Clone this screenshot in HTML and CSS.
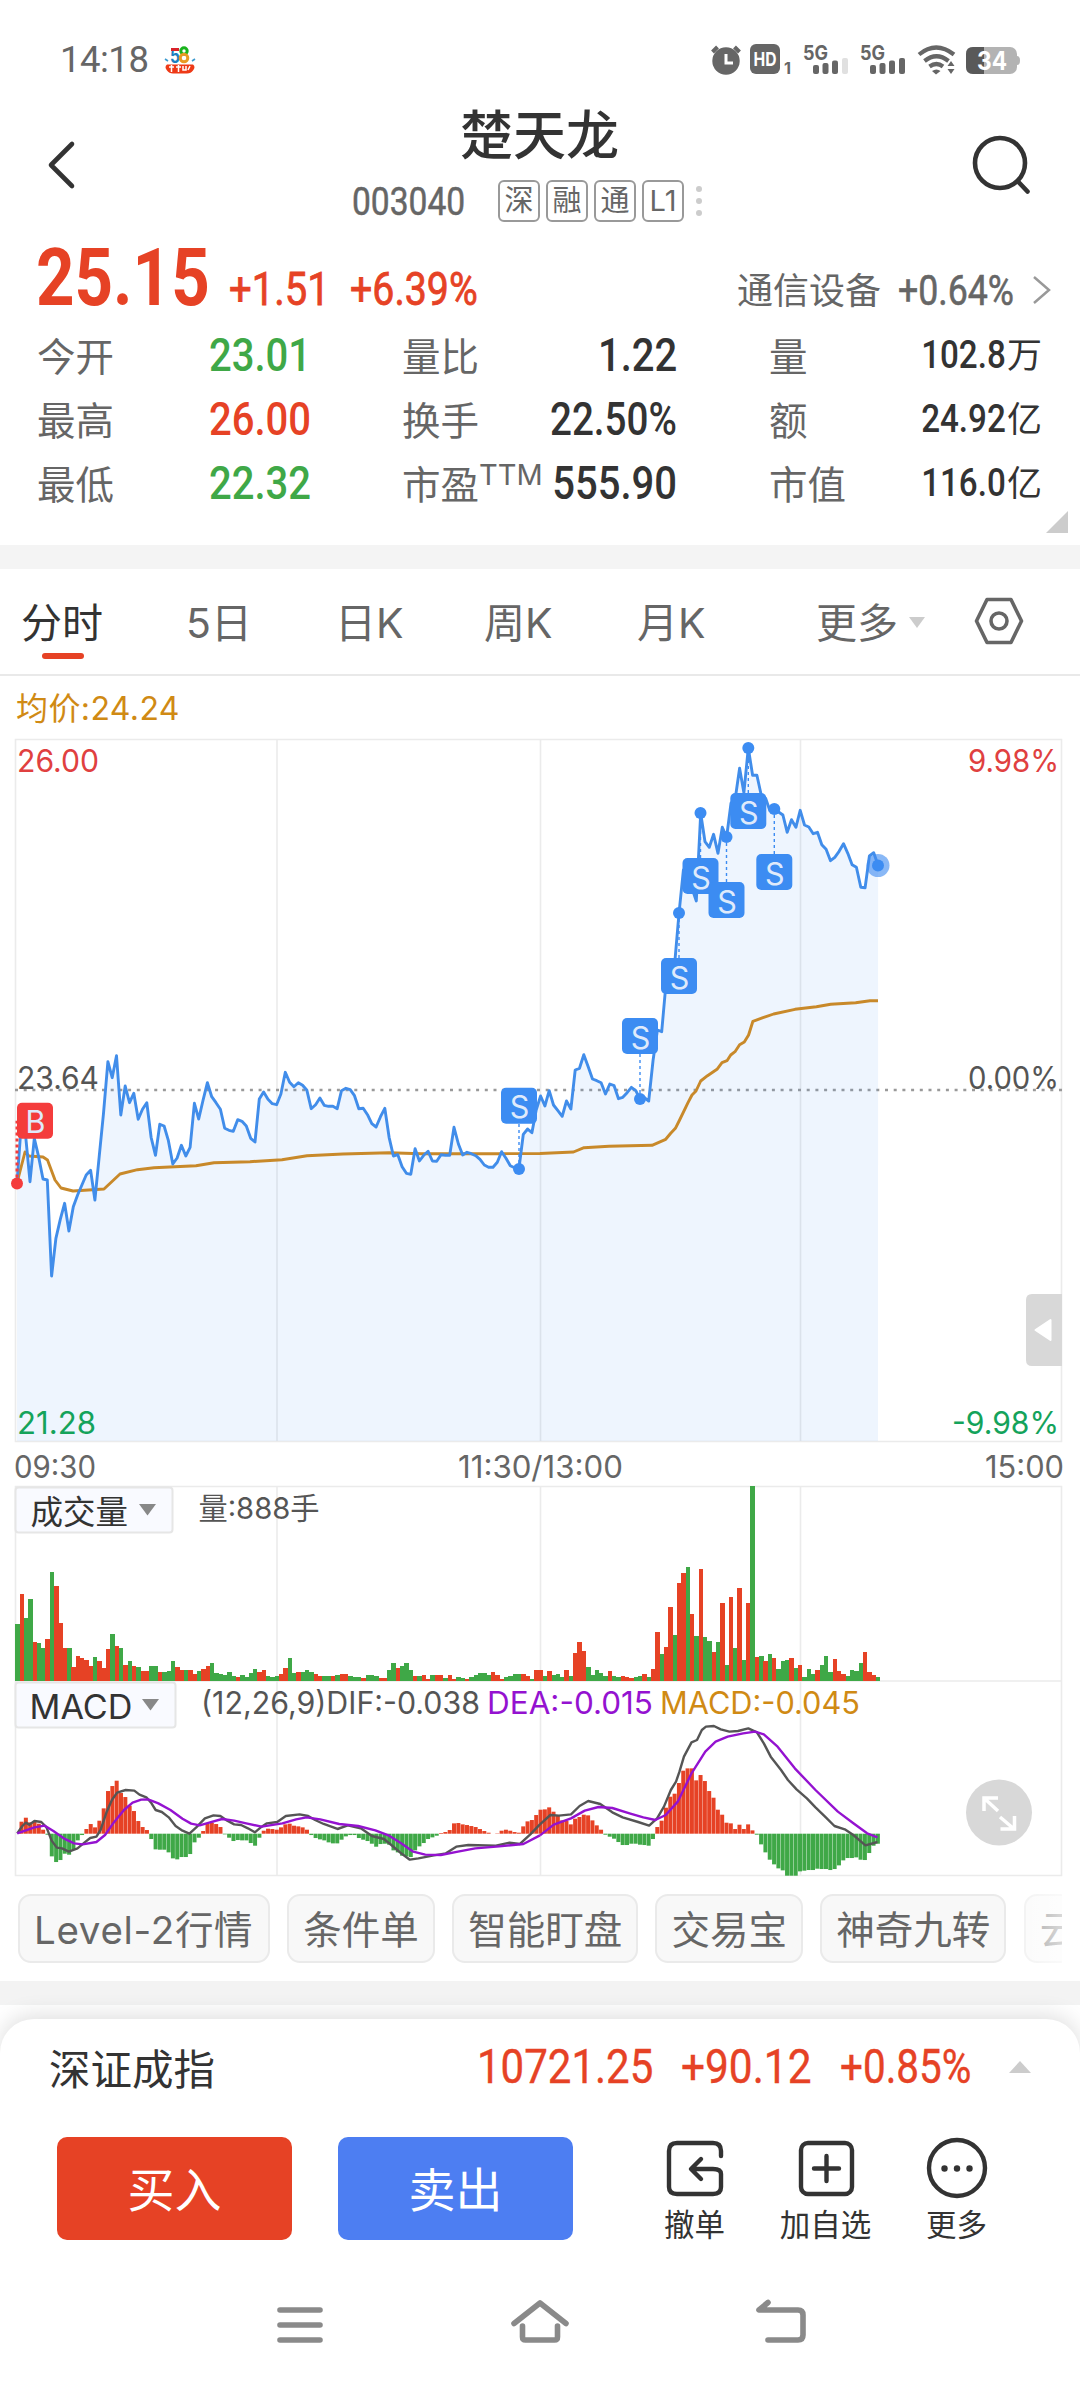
FILE: index.html
```html
<!DOCTYPE html>
<html lang="zh-CN">
<head>
<meta charset="utf-8">
<title>楚天龙 003040</title>
<link rel="stylesheet" href="styles.css">
</head>
<body>
<header class="status">
  <span class="clock">14:18</span>
  <svg class="app58" width="32" height="30" viewBox="0 0 32 30">
    <text x="6" y="18" font-size="20" class="bold" fill="#1c7fc0" textLength="10" lengthAdjust="spacingAndGlyphs">5</text>
    <path d="M7 3h8v3H7z" fill="#d8222a"/>
    <circle cx="20" cy="6" r="3.2" fill="none" stroke="#19b31c" stroke-width="3"/>
    <circle cx="20" cy="13" r="3.8" fill="none" stroke="#e99a23" stroke-width="3"/>
    <path d="M1 14l3 2M31 14l-3 2" stroke="#3a9ad0" stroke-width="1.6"/>
    <path d="M3 19.500h26q3 2.500 0 6-2 3-6 3H9q-4 0-6-3-3-3.500 0-6z" fill="#ee3a17"/>
    <path d="M5 22h5M7.500 20v7M12 22h5M14.500 20v7M19 21v4h3v-4M24 25l2-4" stroke="#fff" stroke-width="1.500" fill="none"/>
  </svg>
  <svg class="sysicons" width="310" height="34" viewBox="710 42 310 34">
    <g fill="#666">
      <circle cx="726" cy="61" r="13.700"/>
      <path d="M712.500 52l5-5M739.500 52l-5-5" stroke="#666" stroke-width="4"/>
      <path d="M726 54v9h7" stroke="#fff" stroke-width="3" fill="none"/>
      <rect x="750" y="44" width="30" height="30" rx="6"/>
      <text x="753.500" y="66" font-size="19" class="bold" fill="#fff" textLength="23" lengthAdjust="spacingAndGlyphs">HD</text>
      <text x="784" y="73.500" font-size="16" class="bold" textLength="7" lengthAdjust="spacingAndGlyphs">1</text>
      <text x="803" y="59.500" font-size="20" class="bold" textLength="25" lengthAdjust="spacingAndGlyphs">5G</text>
      <text x="860" y="59.500" font-size="20" class="bold" textLength="25" lengthAdjust="spacingAndGlyphs">5G</text>
      <rect x="813" y="65" width="6" height="9" rx="2"/><rect x="822.500" y="63" width="6" height="11" rx="2"/><rect x="832" y="60.500" width="6" height="13.500" rx="2"/><rect x="842" y="58" width="6" height="16" rx="2" fill="#e0e0e0"/>
      <rect x="870" y="65" width="6" height="9" rx="2"/><rect x="879.500" y="63" width="6" height="11" rx="2"/><rect x="889" y="60.500" width="6" height="13.500" rx="2"/><rect x="899" y="58" width="6" height="16" rx="2"/>
      <path d="M919 54.500q17-14 35 0M924.500 61q12-9.500 24 0M929.500 66.500q7-5 13.500 0" fill="none" stroke="#666" stroke-width="4.200"/>
      <path d="M932 71q4.500-3 8.500 0l-4.500 3.500zM947.500 66l3.500-5 3.500 5zM947.500 69l3.500 5 3.500-5z"/>
    </g>
    <rect x="966" y="47" width="51" height="27" rx="7" fill="#b3b3b3"/>
    <path d="M1017 56q3 0 3 4.500t-3 4.500z" fill="#b3b3b3"/>
    <path d="M984 47h-11q-7 0-7 7v13q0 7 7 7h11z" fill="#595959"/>
    <text x="977" y="70" font-size="25" class="bold" fill="#fff" textLength="30" lengthAdjust="spacingAndGlyphs">34</text>
  </svg>
</header>

<div class="titlebar">
  <svg width="28" height="50" viewBox="0 0 28 50"><path d="M24 4L3 25l21 21" class="ln thick"/></svg>
  <div class="name">
    <h1>楚天龙</h1>
    <div class="sub">
      <span class="din code">003040</span>
      <i class="tag">深</i><i class="tag">融</i><i class="tag">通</i><i class="tag">L1</i>
      <svg width="6" height="32" viewBox="0 0 6 32" fill="#ccc"><circle cx="3" cy="4" r="3"/><circle cx="3" cy="16" r="3"/><circle cx="3" cy="28" r="3"/></svg>
    </div>
  </div>
  <svg width="60" height="60" viewBox="0 0 60 60"><circle cx="29" cy="29" r="25" class="ln thick"/><path d="M47 47.500l9.500 10" class="ln thick"/></svg>
</div>

<section class="quote">
  <div class="priceline">
    <span class="din price">25.15</span>
    <span class="din chg">+1.51</span>
    <span class="din pct">+6.39%</span>
    <span class="sector">通信设备</span>
    <span class="din secpct">+0.64%</span>
    <svg class="chev" width="20" height="32" viewBox="0 0 20 32"><path d="M2 3l15 13L2 29" fill="none" stroke="#999" stroke-width="2.500"/></svg>
  </div>
  <div class="stats">
    <b>今开</b><span class="din first green">23.01</span><p><b>量比</b><span class="din end">1.22</span></p><p><b>量</b><span class="unit"><span class="din end sm">102.8</span>万</span></p>
    <b>最高</b><span class="din first red">26.00</span><p><b>换手</b><span class="din end wide">22.50%</span></p><p><b>额</b><span class="unit"><span class="din end sm">24.92</span>亿</span></p>
    <b>最低</b><span class="din first green">22.32</span><p><b>市盈<sup>TTM</sup></b><span class="din end">555.90</span></p><p><b>市值</b><span class="unit"><span class="din end sm">116.0</span>亿</span></p>
  </div>
  <i class="corner"></i>
</section>

<nav class="tabs">
  <span class="on">分时</span><span>5日</span><span>日K</span><span>周K</span><span>月K</span>
  <span class="more">更多<i class="tri"></i></span>
  <svg width="50" height="50" viewBox="0 0 50 50" fill="none" stroke="#666" stroke-width="3.600" stroke-linejoin="round"><path d="M13 3.500h24L47.500 25 37 46.500H13L2.500 25z"/><circle cx="25" cy="25" r="8"/></svg>
</nav>
<div class="avg">均价:24.24</div>

<svg class="chart" id="chart" width="1080" height="1145" viewBox="0 734 1080 1145">
  <g class="grid">
    <path d="M15.500 739.500H1061.500V1441.500H15.500zM277 739.500V1441.500M540.500 739.500V1441.500M800.500 739.500V1441.500"/>
    <path d="M15.500 1486.500H1061.500V1875.500H15.500zM277 1486.500V1875.500M540.500 1486.500V1875.500M800.500 1486.500V1875.500M15 1681H1062"/>
  </g>
  <path d="M15 1090H1062" stroke="#999" stroke-width="2.600" stroke-dasharray="3 5.700"/>
  <polygon id="area" fill="#3f8ff0" fill-opacity=".09"/>
  <polyline class="curve" stroke="#c8892a" points="17,1183 25,1152 29,1156 43,1157 47.500,1160 55,1180 61,1188 73,1191 104,1189 120,1174 137.500,1169.700 154,1167.700 196,1165.700 214,1162.700 250,1161.700 282,1159.700 307,1155.700 343,1154 389,1152.700 421,1153.700 500,1153.700 540,1153.500 573.500,1152 584,1147.700 609,1146.300 652,1145.300 665.700,1139.300 670.700,1133.300 675.400,1128.300 679.600,1120 688,1102.700 692,1095 696,1091 700.700,1081 707.500,1075.700 717,1069.300 722,1062.700 727,1060.700 730.700,1055 735,1051.700 739.600,1044.700 744.300,1042 748.600,1035 752.900,1021.300 763,1017.700 773.600,1014 795,1009.300 816.400,1006.700 830.700,1004.300 855.700,1002.700 870,1000.700 878,1000.700"/>
  <polyline id="price" class="curve" stroke="#418dea"/>
  <g id="marks"></g>
  <circle cx="878" cy="865.500" r="11.500" fill="#418df0" fill-opacity=".62"/><circle cx="878" cy="865.500" r="6" fill="#3c8cf2"/>

  <g font-size="30.500">
    <text x="17" y="772" fill="#e04040" textLength="82" lengthAdjust="spacingAndGlyphs">26.00</text>
    <text x="17" y="1089" fill="#555" textLength="82" lengthAdjust="spacingAndGlyphs">23.64</text>
    <text x="17" y="1434" fill="#14a35b" textLength="79" lengthAdjust="spacingAndGlyphs">21.28</text>
    <text x="968" y="772" fill="#e04040" textLength="91" lengthAdjust="spacingAndGlyphs">9.98%</text>
    <text x="968" y="1089" fill="#555" textLength="91" lengthAdjust="spacingAndGlyphs">0.00%</text>
    <text x="952" y="1434" fill="#14a35b" textLength="107" lengthAdjust="spacingAndGlyphs">-9.98%</text>
    <text x="14" y="1478" fill="#666" textLength="82" lengthAdjust="spacingAndGlyphs">09:30</text>
    <text x="458" y="1478" fill="#666" textLength="165" lengthAdjust="spacingAndGlyphs">11:30/13:00</text>
    <text x="985" y="1478" fill="#666" textLength="79" lengthAdjust="spacingAndGlyphs">15:00</text>
  </g>
  <path d="M1032 1294h30v72h-30q-6 0-6-6v-60q0-6 6-6z" fill="#d8d8d8"/>
  <path d="M1035.500 1330l15-10v20z" fill="#fff" stroke="#fff" stroke-width="2" stroke-linejoin="round"/>

  <g id="volume" shape-rendering="crispEdges"></g>
  <rect x="15.500" y="1487.500" width="157" height="45" rx="3" class="pick"/>
  <text x="30.500" y="1523.500" font-size="32.500" fill="#333">成交量</text>
  <path d="M139 1504h17l-8.500 11.500z" fill="#888"/>
  <text x="198.500" y="1518.500" font-size="29.500" fill="#555" textLength="121" lengthAdjust="spacingAndGlyphs">量:888手</text>

  <g id="hist"></g>
  <g transform="translate(0 1420) scale(.34435 .33333)" class="macd">
    <polyline stroke="#555" points="50,1240 65,1218 75,1208 85,1214 100,1203 120,1206 135,1222 150,1262 165,1283 180,1285 200,1295 225,1285 245,1268 262,1254 280,1250 292,1230 310,1175 325,1140 340,1118 365,1110 390,1112 405,1124 425,1132 440,1150 452,1170 470,1176 490,1192 510,1218 530,1232 550,1241 570,1222 595,1195 620,1186 640,1188 660,1202 680,1213 700,1215 720,1225 740,1237 760,1220 775,1210 805,1206 830,1188 870,1183 895,1188 915,1200 940,1212 980,1227 1010,1216 1050,1226 1080,1248 1115,1257 1140,1278 1165,1300 1190,1319 1215,1315 1260,1306 1295,1300 1325,1280 1360,1275 1440,1277 1480,1268 1510,1272 1540,1243 1568,1213"/>
    <polyline stroke="#9412d0" points="50,1240 100,1222 130,1217 155,1233 185,1255 215,1270 240,1273 280,1266 305,1245 330,1208 360,1170 385,1148 410,1139 430,1138 460,1150 495,1170 530,1196 555,1211 580,1216 610,1207 645,1197 680,1202 715,1210 760,1220 820,1210 860,1198 890,1192 930,1198 985,1212 1040,1218 1090,1231 1130,1247 1165,1270 1200,1295 1235,1304 1280,1305 1330,1295 1380,1285 1450,1279 1520,1272 1568,1246"/>
  </g>
  <g transform="translate(540 1420) scale(.34435 .33333)" class="macd">
    <polyline stroke="#555" points="0,1213 30,1185 55,1187 90,1183 115,1158 140,1143 175,1152 210,1177 240,1192 285,1206 317,1217 340,1195 360,1160 380,1110 395,1085 405,1055 418,1010 440,967 456,960 470,930 482,920 505,918 525,928 550,935 575,933 605,925 630,937 650,970 670,1010 700,1050 720,1080 745,1108 775,1135 800,1162 830,1192 855,1218 885,1228 910,1245 945,1276 980,1266"/>
    <polyline stroke="#9412d0" points="0,1246 40,1214 90,1195 130,1172 170,1161 210,1164 260,1180 300,1192 335,1200 365,1185 400,1145 440,1060 480,995 510,965 545,950 590,940 625,935 650,943 690,980 740,1045 800,1110 865,1175 910,1210 950,1240 980,1252"/>
  </g>
  <rect x="15.500" y="1682.500" width="160" height="45" rx="3" class="pick"/>
  <text x="29.500" y="1719" font-size="33.500" fill="#333" textLength="103" lengthAdjust="spacingAndGlyphs">MACD</text>
  <path d="M142 1699h17l-8.500 11.500z" fill="#888"/>
  <g font-size="30.500">
    <text x="201" y="1714" fill="#555" textLength="279" lengthAdjust="spacingAndGlyphs">(12,26,9)DIF:-0.038</text>
    <text x="487" y="1714" fill="#9412d0" textLength="166" lengthAdjust="spacingAndGlyphs">DEA:-0.015</text>
    <text x="660" y="1714" fill="#d08a14" textLength="200" lengthAdjust="spacingAndGlyphs">MACD:-0.045</text>
  </g>
  <circle cx="999" cy="1812.500" r="33" fill="#d8d8d8"/>
  <path d="M998 1811l-14-13M984 1811v-13h14M1000 1817l14 12M1014.500 1816v13h-14" fill="none" stroke="#fff" stroke-width="3.500"/>
</svg>

<div class="chips">
  <span>Level-2行情</span><span>条件单</span><span>智能盯盘</span><span>交易宝</span><span>神奇九转</span><span>云</span>
</div>
<div class="band"></div>

<section class="panel">
  <div class="index">
    <span class="idxname">深证成指</span>
    <span class="din i1">10721.25</span><span class="din i2">+90.12</span><span class="din i3">+0.85%</span>
    <i class="tri up"></i>
  </div>
  <div class="actions">
    <button class="buy">买入</button><button class="sell">卖出</button>
    <div class="act a1"><svg width="62" height="62" viewBox="0 0 62 62"><path d="M57 19v-5q0-8-8-8H13q-8 0-8 8v36q0 7 8 7h36q8 0 8-7V37q0-5-8-5H28M37 22L27 32l10 10" class="ln"/></svg>撤单</div>
    <div class="act a2"><svg width="62" height="62" viewBox="0 0 62 62"><rect x="6" y="6" width="51" height="51" rx="7" class="ln"/><path d="M31.500 19v25M19 31.500h25" class="ln"/></svg>加自选</div>
    <div class="act a3"><svg width="62" height="62" viewBox="0 0 62 62"><circle cx="31" cy="31" r="28" class="ln"/><g fill="#333"><circle cx="18.500" cy="31.500" r="3.200"/><circle cx="31" cy="31.500" r="3.200"/><circle cx="43.500" cy="31.500" r="3.200"/></g></svg>更多</div>
  </div>
</section>

<footer class="sysnav">
  <svg width="48" height="50" viewBox="0 0 48 50"><path d="M4 12h40M4 27h40M4 42h40"/></svg>
  <svg width="60" height="50" viewBox="0 0 60 50"><path d="M4 25.500L30 5l26 20.500M12.500 28v11q0 3 3 3h29q3 0 3-3V28"/></svg>
  <svg width="54" height="50" viewBox="0 0 54 50"><path d="M14 4.500L5 12h39q5 0 5 5v20q0 5-5 5H14"/></svg>
</footer>
<script src="chart.js"></script>
</body>
</html>
```
FILE: styles.css
```css
* { box-sizing: border-box; }
body { margin: 0; width: 1080px; height: 2388px; overflow: hidden; background: #fff; color: #333; font-family: Inter, "Noto Sans CJK SC", sans-serif; }
svg { display: block; overflow: visible; flex: none; }
svg text { font-family: Inter, "Noto Sans CJK SC", sans-serif; }
.bold { font-weight: 700; }
i { font-style: normal; }
.din { display: inline-block; font-family: Roboto, sans-serif; font-weight: 500; font-size: 46.5px; white-space: nowrap; transform: scaleX(.86); transform-origin: 0 50%; }
.green { color: #3fa847; }
.red { color: #e64225; }
.ln { fill: none; stroke: #333; stroke-width: 4.4; stroke-linecap: round; stroke-linejoin: round; }
.thick { stroke-width: 4.6; }

.status { height: 90px; display: flex; align-items: flex-start; padding: 42px 60px 0; color: #666; }
.clock { font-size: 36.5px; line-height: 35px; width: 104px; font-family: Roboto, sans-serif; letter-spacing: -.5px; }
.app58 { margin-top: 3px; }
.sysicons { margin-left: auto; }

.titlebar { height: 146px; display: flex; padding: 0 49px 0 48px; }
.titlebar > svg:first-child { margin-top: 50px; }
.titlebar > svg:last-child { margin: 44px 0 0 auto; }
.name { width: 373px; margin-left: 276px; }
h1 { margin: 14px 0 0; font-size: 53px; line-height: 64px; font-weight: 500; text-align: center; padding-left: 2px; }
.sub { display: flex; align-items: center; margin-top: 12px; height: 42px; gap: 6px; }
.code { flex: none; font-size: 39.5px; font-weight: 400; color: #666; width: 140px; transform: scaleX(.85); -webkit-text-stroke: .5px #666; }
.tag { flex: none; width: 42px; height: 42px; border: 2px solid #999; border-radius: 6px; color: #666; font-size: 29px; line-height: 37px; text-align: center; }
.tag + svg { margin-left: 6px; }

.quote { position: relative; height: 333px; border-bottom: 24px solid #f4f4f4; }
.priceline { height: 90px; display: flex; align-items: baseline; padding: 0 28px 0 36px; color: #e64225; }
.price { font-size: 80px; font-weight: 700; line-height: 85px; width: 193px; transform: scaleX(.84); }
.chg { width: 121px; font-weight: 400; -webkit-text-stroke: .8px; }
.pct { width: 387px; font-weight: 400; -webkit-text-stroke: .8px; transform: scaleX(.845); }
.sector { color: #666; font-size: 36px; width: 161px; position: relative; top: -1px; }
.secpct { color: #666; font-size: 43px; width: 134px; font-weight: 400; -webkit-text-stroke: .6px; transform: scaleX(.83); }
.chev { align-self: center; margin-top: 18px; }
.stats { display: grid; grid-template-columns: 172px 193px 275px 273px; grid-auto-rows: 64px; padding-left: 37px; line-height: 64px; }
.stats > :nth-child(4n) { margin-left: 92px; width: 273px; }
.stats b { font-weight: 400; color: #666; font-size: 38.5px; line-height: 62px; white-space: nowrap; }
.stats p { margin: 0; display: flex; justify-content: space-between; height: 64px; }
.stats .din { line-height: 58px; height: 64px; }
.end { transform-origin: 100% 50%; margin-left: -24px; }
.stats .wide { transform: scaleX(.83); }
.stats .sm { font-size: 39.5px; margin-right: 1px; transform: scaleX(.84); }
.unit { font-size: 35px; white-space: nowrap; line-height: 58px; }
sup { font-size: 29px; line-height: 0; vertical-align: 14px; }
.corner { position: absolute; left: 1046px; top: 275px; border-style: solid; border-width: 0 0 22px 22px; border-color: transparent transparent #ccc; }

.tabs { height: 107px; border-bottom: 2px solid #e9e9e9; display: grid; grid-template-columns: 165px 149px 149px 153px 179px 159px 50px; padding-left: 21px; font-size: 41px; line-height: 108px; color: #666; }
.tabs svg { margin-top: 27px; margin-left: -1px; }
.tabs .on { color: #333; position: relative; }
.tabs .on::after { content: ""; position: absolute; left: 21px; top: 84px; width: 42px; height: 6px; border-radius: 3px; background: #e64225; }
.tri { display: inline-block; border: 8px solid transparent; border-top: 11px solid #ccc; border-bottom: 0; margin-left: 11px; vertical-align: 10px; }
.tri.up { border-top: 0; border-bottom: 12px solid #ccc; border-left-width: 11px; border-right-width: 11px; margin: 0; }
.avg { height: 58px; padding-left: 16px; font-size: 32px; line-height: 66px; color: #d08a14; letter-spacing: .4px; }

.grid path { fill: none; stroke: #ebebeb; stroke-width: 1.6; }
.curve { fill: none; stroke-width: 2.9; stroke-linejoin: round; }
.macd polyline { fill: none; stroke-width: 2.4; vector-effect: non-scaling-stroke; stroke-linejoin: round; }
.pick { fill: #f9faff; stroke: #e6e6e6; stroke-width: 2; }

.chips { width: 1062px; height: 102px; padding: 15px 0 0 18px; display: flex; gap: 18px; overflow: hidden; position: relative; }
.chips span { flex: none; height: 69px; padding: 0 14px; border: 2px solid #eaeaea; border-radius: 13px; background: #f8f8f8; color: #666; font-size: 38.5px; line-height: 68px; white-space: nowrap; }
.chips span:first-child { width: 252px; letter-spacing: .7px; }
.chips span:nth-child(n+2) { margin-left: -.7px; }
.chips::after { content: ""; position: absolute; right: 0; top: 0; width: 54px; height: 100%; background: linear-gradient(90deg, rgba(255,255,255,.3), rgba(255,255,255,.75)); }
.band { height: 24px; background: #f3f3f3; }

.panel { position: relative; margin-top: 14px; height: 252px; border-radius: 34px 34px 0 0; background: #fff; box-shadow: 0 -4px 22px rgba(0,0,0,.13); }
.index { display: flex; align-items: center; height: 95px; padding-left: 49px; color: #e64225; }
.idxname { width: 428px; color: #333; font-size: 41.5px; }
.index .din { font-size: 49px; font-weight: 400; -webkit-text-stroke: .4px; transform: scaleX(.825); }
.index .i1 { width: 204px; transform: scaleX(.857); } .index .i2 { width: 159px; transform: scaleX(.865); } .i3 { width: 169px; }
.actions { display: flex; padding: 23px 0 0 57px; }
button { width: 235px; height: 103px; margin-right: 46px; padding: 0 0 4px; border: 0; border-radius: 10px; font: 47px/96px "Noto Sans CJK SC", sans-serif; color: #fff; background: #e64225; }
.sell { background: #4d7ef2; }
.act { width: 131px; font-size: 30.5px; line-height: 44px; display: flex; flex-direction: column; align-items: center; color: #333; white-space: nowrap; }
.act svg { margin-bottom: 4px; }
.a1 { margin-left: 10px; }

.sysnav { display: flex; height: 117px; padding: 27px 0 0 276px; background: #fff; position: relative; }
.sysnav path { fill: none; stroke: #8a8a8a; stroke-width: 5.6; stroke-linecap: round; stroke-linejoin: round; }
.sysnav svg:nth-child(2) { margin-left: 186px; }
.sysnav svg:nth-child(3) { margin-left: 184px; }
```
FILE: chart.js
```js
const NS = 'http://www.w3.org/2000/svg';
const $ = id => document.getElementById(id);
function add(parent, tag, attrs, text) {
  const e = document.createElementNS(NS, tag);
  for (const k in attrs) e.setAttribute(k, attrs[k]);
  if (text) e.textContent = text;
  parent.appendChild(e);
}

// One sample per minute, in thirds of a pixel below each session's base line.
const morning = [550,370,410,545,415,470,537,540,828,715,658,610,693,620,585,555,525,511,600,470,340,185,233,167,345,258,308,280,358,328,308,412,466,373,378,422,492,474,436,468,442,310,357,300,248,290,308,328,385,391,394,359,364,378,415,426,297,276,298,311,314,282,217,247,260,248,256,271,326,314,294,316,319,319,326,272,265,269,287,326,325,344,371,381,350,325,412,468,464,500,520,523,446,483,466,454,483,484,464,466,466,382,432,465,457,461,467,478,495,502,502,487,455,475,497,503,507,403,387,398,330,288,318,272];
const afternoon = [1155,1172,1189,1143,1167,1050,1045,1004,1040,1077,1082,1088,1122,1092,1097,1136,1132,1118,1102,1112,1138,1133,1143,1020,930,935,790,750,730,580,450,480,505,543,280,365,382,343,400,322,352,250,235,145,218,84,166,166,225,235,272,267,276,285,337,299,322,271,315,321,341,337,374,388,422,412,394,371,400,434,442,502,503,408,398,436];
const ys = morning.map(v => 1000 + v / 3).concat(afternoon.map(v => 720 + v / 3));
const line = ys.map((y, i) => `${(17 + i * 4.327).toFixed(1)},${y.toFixed(1)}`).join(' ');
$('price').setAttribute('points', line);
$('area').setAttribute('points', `17,1441 ${line} 878,1441`);

// Trade markers: letter, dot x/y, label x/y.
const marks = [['B',17,1183.5,35,1120.7],['S',519,1169,519,1105.7],['S',640,1099,640,1036],['S',679,913,679,976],['S',700.5,813,700.5,876],['S',726.5,837,726.5,900],['S',748.3,748,748.3,811],['S',774.3,809,774.3,872]];
for (const [t, dx, dy, x, y] of marks) {
  const c = t === 'B' ? '#f43c3c' : '#3c8cf2', g = $('marks');
  add(g, 'path', { d: `M${dx} ${dy}V${y}`, stroke: c, 'stroke-width': t === 'B' ? 3 : 1.4, 'stroke-dasharray': '3 3' });
  add(g, 'circle', { cx: dx, cy: dy, r: 6, fill: c });
  add(g, 'rect', { x: x - 18, y: y - 18, width: 36, height: 36, rx: 5, fill: c });
  add(g, 'text', { x: x + .5, y: y + 12.5, 'font-size': 30.5, 'text-anchor': 'middle', fill: '#dfeafb' }, t);
}

const RED = '#e64225', GREEN = '#3fa847';
const vol = 'g612 r522 g594 g537 r666 g669 g683 r656 g454 r497 r609 r684 g684 r739 r708 r712 r718 r736 g709 r721 r743 r687 g641 r676 g682 r733 g723 r738 g741 r753 r753 g738 g736 r755 g755 g753 g723 r741 r749 g749 r750 r762 g753 r747 r738 g727 g759 g762 g765 g754 g767 r770 g765 g769 g759 g747 r754 r750 g766 g769 g766 r761 r744 g712 g759 r756 g756 g750 g755 r760 r767 g768 g768 r768 g765 r760 r762 g767 g770 g770 r773 g764 g765 g767 r772 r774 g750 g727 r743 g737 g727 g748 r766 g766 r765 r776 g765 r765 r765 g774 r765 r775 g771 g774 r775 g771 g765 g759 g759 g764 r756 r763 r776 g770 g766 g760 g761 r762 r767 g776 r750 r750 g766 r753 g763 g761 g771 r750 g768 r699 r664 r693 g741 g764 g748 g759 g768 r752 g767 g771 r768 r771 r774 g771 g767 r761 g769 r747 r634 g702 r679 r561 g644 r488 r459 g441 r581 g647 r447 g649 g661 r696 g664 r549 g733 r529 g682 r503 g718 r548 g198 r711 g708 r721 g701 r712 g745 g722 g718 r714 g742 r733 g769 g747 g760 r750 g735 g706 g754 r716 r752 r762 g768 g750 g753 g728 r696 r754 r764 g771'.split(' ');
vol.forEach((s, i) => {
  const h = (782 - s.slice(1)) / 3;
  add($('volume'), 'rect', { x: 15.2 + i * 4.325, y: 1681 - h, width: 4.4, height: h, fill: s[0] === 'r' ? RED : GREEN });
});

const hist = [0,36,48,34,36,30,12,-3,-68,-85,-79,-60,-63,-48,-20,-4,14,29,19,39,76,128,143,159,122,110,84,68,38,20,11,-16,-47,-48,-48,-56,-74,-77,-70,-70,-61,-26,-12,8,30,33,29,20,-2,-12,-22,-19,-20,-20,-28,-36,-12,9,15,14,12,19,28,30,24,22,19,12,-4,-13,-17,-20,-26,-29,-29,-18,-8,-4,-4,-13,-18,-22,-30,-39,-31,-30,-33,-50,-56,-66,-68,-70,-50,-38,-28,-16,-11,-6,2,5,11,31,32,28,26,23,20,14,8,3,0,1,9,12,9,5,3,22,37,41,56,72,73,79,66,54,40,38,28,45,50,57,55,40,25,12,-3,-9,-15,-25,-34,-34,-30,-30,-33,-34,-36,-16,20,39,78,111,120,152,189,196,196,160,176,158,128,108,72,57,33,31,14,27,14,28,10,-3,-32,-56,-78,-92,-104,-110,-126,-126,-126,-113,-111,-109,-109,-105,-106,-106,-109,-106,-95,-80,-73,-73,-71,-78,-79,-58,-36,-30];
hist.forEach((v, i) => {
  const h = Math.abs(v) / 3;
  add($('hist'), 'rect', { x: 15.2 + i * 4.325, y: v > 0 ? 1833.7 - h : 1833.7, width: 4, height: h, fill: v > 0 ? RED : GREEN });
});
```
